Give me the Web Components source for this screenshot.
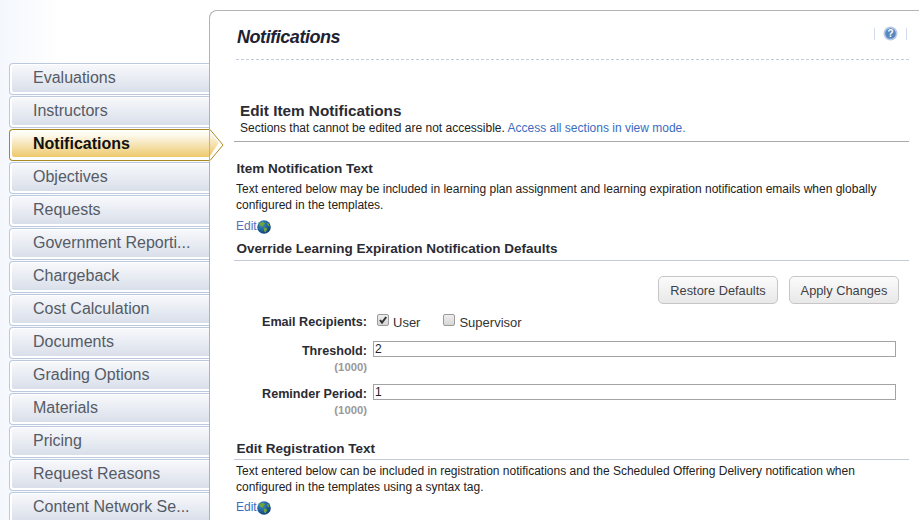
<!DOCTYPE html>
<html><head><meta charset="utf-8"><style>
html,body{margin:0;height:520px;overflow:hidden;background:#fff;font-family:"Liberation Sans",Arial,sans-serif}
</style></head><body>
<x-app>
<x-side slot="side">
<x-tab>Evaluations</x-tab><x-tab>Instructors</x-tab><x-tab active>Notifications</x-tab><x-tab>Objectives</x-tab><x-tab>Requests</x-tab><x-tab>Government Reporti...</x-tab><x-tab>Chargeback</x-tab><x-tab>Cost Calculation</x-tab><x-tab>Documents</x-tab><x-tab>Grading Options</x-tab><x-tab>Materials</x-tab><x-tab>Pricing</x-tab><x-tab>Request Reasons</x-tab><x-tab>Content Network Se...</x-tab>
</x-side>
<x-panel slot="main" title="Notifications">
<x-page-head heading="Edit Item Notifications">Sections that cannot be edited are not accessible. <a style="color:#3b6cc0;text-decoration:none">Access all sections in view mode.</a></x-page-head>
<x-section heading="Item Notification Text">Text entered below may be included in learning plan assignment and learning expiration notification emails when globally configured in the templates.</x-section>
<x-override></x-override>
<x-section heading="Edit Registration Text" ruled style="margin-top:23px">Text entered below can be included in registration notifications and the Scheduled Offering Delivery notification when configured in the templates using a syntax tag.</x-section>
</x-panel>
</x-app>
<script>
const def=(n,html)=>customElements.define(n,class extends HTMLElement{constructor(){super();this.attachShadow({mode:'open'}).innerHTML=html;}connectedCallback(){const a=this.getAttribute('heading')||this.getAttribute('title');const e=this.shadowRoot.querySelector('[data-t]');if(e&&a)e.textContent=a;}});
const GLOBE=`<svg width="14" height="14" viewBox="0 0 14 14" style="display:block"><defs><radialGradient id="g" cx=".35" cy=".3" r=".8"><stop offset="0" stop-color="#3c8fc8"/><stop offset="1" stop-color="#0c3a6e"/></radialGradient></defs><circle cx="7" cy="7" r="6.8" fill="url(#g)"/><path d="M3 2.5 6.5 2 8 3.4 6.6 5 5.6 6.8 3.8 6 2.2 4.6Z M7 7.4 9.6 8 10 9.6 8.6 12.4 7.4 11.4 6.6 9Z M9.6 2.6 12 4 12.6 6.4 10.8 5.6Z" fill="#6fa53a"/></svg>`;
def('x-app',`<style>:host{display:flex;height:520px;overflow:hidden;align-items:flex-start;background:linear-gradient(90deg,#f4f7fc,#fff 60px)}
.s{flex:none;width:209px;padding-top:63px;box-sizing:border-box}.m{flex:1;min-width:0;position:relative;z-index:1;margin-top:10px}</style>
<div class="s"><slot name="side"></slot></div><div class="m"><slot name="main"></slot></div>`);
def('x-side',`<style>:host{display:flex;flex-direction:column;gap:1px;padding-left:9px;position:relative;z-index:2}</style><slot></slot>`);
def('x-tab',`<style>:host{display:block;height:32px;box-sizing:border-box;position:relative;border:1px solid #bcc8de;border-right:0;border-radius:4px 0 0 4px;background:#fff;padding:1px 0 2px 2px;font-size:16px;color:#555b66}
.i{height:100%;line-height:25px;padding-left:21px;background:linear-gradient(#f7f8fb,#d9dfea);border-radius:2px 0 0 2px;white-space:nowrap;overflow:hidden}
:host([active]){border:1px solid #a98a1f;border-right:0;font-weight:bold;color:#111;background:#fff}
:host([active]) .i{background:linear-gradient(#fdfaf0 10%,#eec96c);padding-left:21px;height:25px;margin-top:1px;line-height:23px}
svg{display:none;position:absolute;left:200px;top:-1px}:host([active]) svg{display:block}</style>
<div class="i"><slot></slot></div>
<svg width="14" height="32" viewBox="0 0 14 32"><defs><linearGradient id="a" x1="0" x2="0" y1="2" y2="26" gradientUnits="userSpaceOnUse"><stop offset=".1" stop-color="#fdfaf0"/><stop offset="1" stop-color="#eec96c"/></linearGradient></defs><path d="M0 .5 13 16 0 31.5Z" fill="#fff"/><path d="M0 .5 13 16 0 31.5" fill="none" stroke="#a98a1f"/><path d="M0 2 8.5 14 0 27Z" fill="url(#a)"/></svg>`);
def('x-panel',`<style>:host{display:block;height:520px;box-sizing:border-box;border:1px solid #b3b3b3;border-right:0;border-bottom:0;border-radius:8px 0 0 0;background:#fff;padding:0 10px 0 24px;color:#222}
h1{margin:0 0 0 -2px;font:italic bold 18px/22px "Liberation Sans",Arial,sans-serif;color:#1c2233;letter-spacing:-.45px;padding:15px 0 0 3px}
.head{position:relative;height:48px;border-bottom:1px dashed #c4cbdd;margin-left:2px}
.help{position:absolute;right:2px;top:15px;display:flex;align-items:center;gap:8px}
.bar{width:1px;height:12px;background:#d3dbe8}</style>
<div class="head"><h1 data-t></h1><div class="help"><span class="bar"></span><svg width="15" height="15" viewBox="0 0 15 15"><circle cx="7.5" cy="7.5" r="7" fill="#b5cbe8"/><circle cx="7.5" cy="7.5" r="5.3" fill="#5a86c0"/><text x="7.5" y="11" text-anchor="middle" font-family="Liberation Sans" font-weight="bold" font-size="10" fill="#fff">?</text></svg><span class="bar"></span></div></div><slot></slot>`);
def('x-page-head',`<style>:host{display:block;margin-top:41px;color:#222}
h2{margin:0 0 0 6px;font:bold 15.3px/20px "Liberation Sans",Arial,sans-serif;color:#2b2b33}
p{margin:0 0 0 6px;font-size:12px;line-height:15px}.r{height:1px;background:#a8a8a8;margin-top:5px}</style>
<h2 data-t></h2><p><slot></slot></p><div class="r"></div>`);
def('x-section',`<style>:host{display:block;margin-top:18px;font-size:12px;line-height:16px;color:#222}
h3{margin:0 0 0 2.5px;font:bold 13.5px/18px "Liberation Sans",Arial,sans-serif;color:#2b2b33}
.r{display:none;height:1px;background:#c5cad8;margin-top:1px}:host([ruled]) .r{display:block}
p{margin:3px 0 0 2px;width:656px}:host([ruled]) p{margin-top:3px;width:650px}
.e{display:flex;align-items:center;margin:5px 0 0 2px;height:16px;color:#5a6fb8}:host([ruled]) .e{margin-top:4px;color:#3b6cc0}
.e svg{margin-top:2px}</style>
<h3 data-t></h3><div class="r"></div><p><slot></slot></p><div class="e">Edit${GLOBE}</div>`);
def('x-btn',`<style>:host{display:inline-flex;align-items:center;justify-content:center;height:28px;box-sizing:border-box;border:1px solid #c6c6c6;border-radius:5px;background:linear-gradient(#fbfbfb,#e8e8e8);font-size:12.8px;color:#3f3f46}</style><slot></slot>`);
def('x-field',`<style>:host{display:grid;grid-template-columns:131px 523px;column-gap:6px;font-size:12.6px;align-items:start}
label{justify-self:end;font-weight:bold;color:#2b2b33;line-height:16px;padding-top:2px}
.box{height:16px;box-sizing:border-box;border:1px solid #a3a3a3;font-size:12px;line-height:14px;padding-left:1px;color:#222}
small{grid-column:1;justify-self:end;font-size:11.3px;font-weight:bold;color:#999;line-height:14px;margin-top:1px}</style>
<label data-t></label><div class="box"><slot></slot></div><small>(1000)</small>`);
const CK=(on)=>`<span style="width:12px;height:12px;margin:0 0 4px;box-sizing:border-box;border:1px solid #9a9a9a;border-radius:2px;background:linear-gradient(#eee,#d6d6d6);display:inline-block;position:relative">${on?'<svg width="12" height="12" viewBox="0 0 12 12" style="position:absolute;left:-1px;top:-1px"><path d="M3 6 5 8.6 9.2 3" fill="none" stroke="#333" stroke-width="2"/></svg>':''}</span>`;
def('x-override',`<style>:host{display:block;font-size:13px;margin-top:6px}
h3{margin:0 0 0 2.5px;font:bold 13.5px/18px "Liberation Sans",Arial,sans-serif;color:#2b2b33}
.r{height:1px;background:#c5cad8;margin-top:2px}
.b{display:flex;justify-content:flex-end;gap:11px;margin:15px 10px 0 0}
.rec{display:grid;grid-template-columns:131px auto;column-gap:10px;margin-top:9px;line-height:18px;align-items:center;font-size:12.6px}
.rec b{justify-self:end;color:#2b2b33}.o{display:flex;align-items:center;color:#333;font-size:13px}.t{margin-left:4px;position:relative;top:1px}
.sp{width:23px}</style>
<h3>Override Learning Expiration Notification Defaults</h3><div class="r"></div>
<div class="b"><x-btn style="width:120px">Restore Defaults</x-btn><x-btn style="width:110px">Apply Changes</x-btn></div>
<div class="rec" style="margin-left:2px"><b>Email Recipients:</b><div class="o">${CK(1)}<span class="t">User</span><span class="sp"></span>${CK(0)}<span class="t">Supervisor</span></div></div>
<x-field heading="Threshold:" style="margin-top:10px;margin-left:2px">2</x-field><x-field heading="Reminder Period:" style="margin-top:10px;margin-left:2px">1</x-field>`);
</script>
</body></html>
